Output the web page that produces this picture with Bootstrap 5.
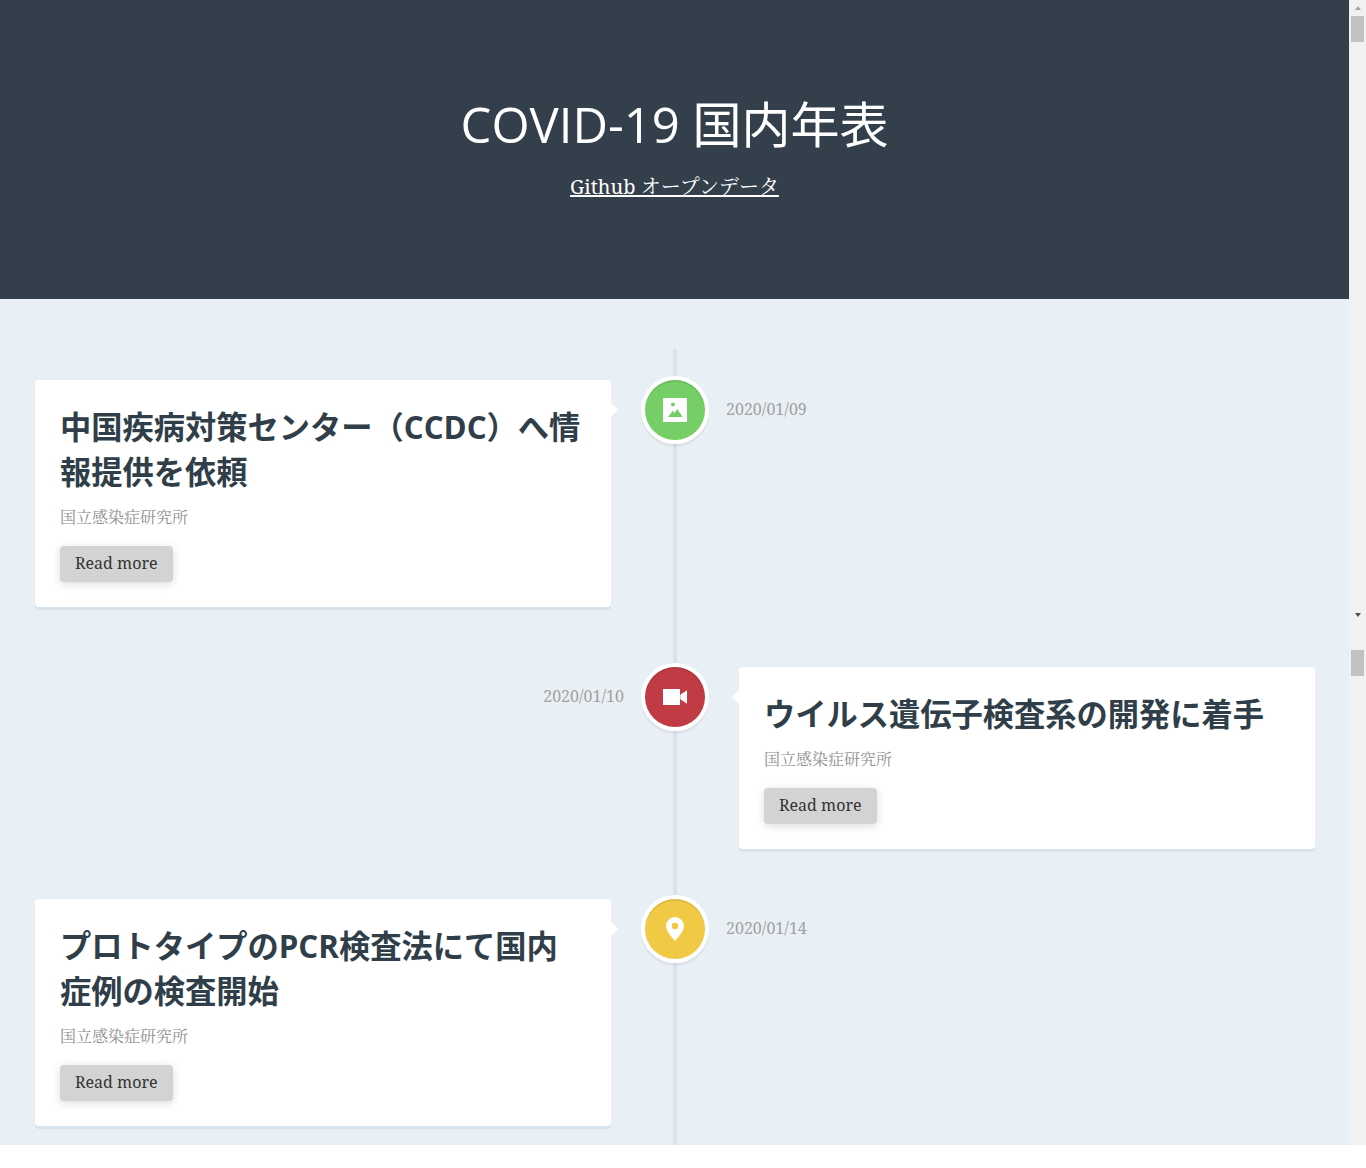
<!DOCTYPE html>
<html lang="ja">
<head>
<meta charset="utf-8">
<title>COVID-19 国内年表</title>
<link href="https://cdn.jsdelivr.net/npm/bootstrap@5.3.0/dist/css/bootstrap.min.css" rel="stylesheet">
<style>
html,body{height:100%;overflow:hidden;background:#fff}
body{font-family:"Noto Serif","Droid Serif","Noto Serif CJK JP","Liberation Serif","Noto Sans CJK JP",serif;font-size:16px;line-height:1.5}
.frame{height:1145px}
.page-pane{width:1349px;overflow:hidden;background:#e9f0f5}
.hero{height:299px;background:#333f4b;color:#fff;padding-bottom:5px}
.hero-title{font-family:"Open Sans","Noto Sans CJK JP",sans-serif;font-size:49px;font-weight:400;line-height:1.2;margin:0 0 21px}
.hero-link{color:#fff;font-size:20px;line-height:1.2}
.hero-link:hover{color:#fff}
.tl{width:1280px;margin:50px 0 0 35px;padding-top:31px;position:relative}
.tl::before{content:"";position:absolute;top:0;bottom:-60px;left:638px;width:4px;background:#d7e4ed}
.tl-row{display:grid;grid-template-columns:1fr 60px 1fr;align-items:start;position:relative}
.tl-row-2{margin-top:60px}
.tl-row-3{margin-top:50px}
.tl-card{position:relative;width:576px;padding:25px;background:#fff;border-radius:4px;box-shadow:0 3px 0 #d7e4ed}
.tl-card-left{justify-self:start}
.tl-card-right{justify-self:end}
.tl-card::before{content:"";position:absolute;top:23px;border:7px solid transparent}
.tl-card-left::before{left:100%;border-left-color:#fff}
.tl-card-right::before{right:100%;border-right-color:#fff}
.tl-head{font-family:"Open Sans","Noto Sans CJK JP",sans-serif;font-size:31.25px;font-weight:700;line-height:45px;color:#303e49;margin:0 0 10px}
.tl-sub{color:#8f8f8f;margin:0 0 17px}
.more-btn{display:inline-block;height:36px;padding:5px 15px 7px;line-height:24px;font-size:16px;border:0;border-radius:4px;background:#d3d3d3;color:#333;box-shadow:0 2px 10px rgba(0,0,0,.14)}
.tl-dot{width:60px;height:60px;border-radius:50%;color:#fff;box-shadow:0 0 0 4px #fff,inset 0 2px 0 rgba(0,0,0,.08),0 3px 0 4px rgba(0,0,0,.05)}
.dot-green{background:#75ce66}
.dot-red{background:#c03b44}
.dot-yellow{background:#f0ca45}
.tl-date{color:#a2a2a2;line-height:58px;margin:0;height:60px;white-space:nowrap}
.date-after{margin-left:21px}
.date-before{margin-right:21px;text-align:right}
.bar{width:17px;background:#f1f1f1}
.bar-up{width:0;height:0;margin:6px auto 6px;border:solid transparent;border-width:0 3.5px 4px;border-bottom-color:#a3a3a3}
.bar-thumb{width:13px;height:26px;margin:0 auto;background:#c1c1c1}
.bar-down{width:0;height:0;margin:571px auto 33px;border:solid transparent;border-width:4px 3.5px 0;border-top-color:#505050}
</style>
</head>
<body>
<div class="frame d-flex">
  <div class="page-pane">
    <header class="hero d-flex flex-column align-items-center justify-content-center text-center">
      <h1 class="hero-title">COVID-19 国内年表</h1>
      <a class="hero-link" href="#">Github オープンデータ</a>
    </header>
    <section class="tl">
      <div class="tl-row">
        <div class="tl-card tl-card-left">
          <h2 class="tl-head">中国疾病対策センター（CCDC）へ情報提供を依頼</h2>
          <p class="tl-sub">国立感染症研究所</p>
          <a class="btn more-btn" href="#">Read more</a>
        </div>
        <div class="tl-dot dot-green d-flex align-items-center justify-content-center">
          <svg width="24" height="24" viewBox="0 0 24 24" aria-hidden="true"><path fill="#fff" fill-rule="evenodd" d="M0 0h24v24H0zM10 4.6a2 2 0 1 0 0 4 2 2 0 0 0 0-4zM5 19h14.7l-5.4-8-2.9 4.3-1.3-2.8z"/></svg>
        </div>
        <p class="tl-date date-after">2020/01/09</p>
      </div>
      <div class="tl-row tl-row-2">
        <p class="tl-date date-before">2020/01/10</p>
        <div class="tl-dot dot-red d-flex align-items-center justify-content-center">
          <svg width="24" height="24" viewBox="0 0 24 24" aria-hidden="true"><path fill="#fff" d="M0 4h17v16H0zM17.3 9.7 24 5.3V18.7l-6.7-4.4z"/></svg>
        </div>
        <div class="tl-card tl-card-right">
          <h2 class="tl-head">ウイルス遺伝子検査系の開発に着手</h2>
          <p class="tl-sub">国立感染症研究所</p>
          <a class="btn more-btn" href="#">Read more</a>
        </div>
      </div>
      <div class="tl-row tl-row-3">
        <div class="tl-card tl-card-left">
          <h2 class="tl-head">プロトタイプのPCR検査法にて国内症例の検査開始</h2>
          <p class="tl-sub">国立感染症研究所</p>
          <a class="btn more-btn" href="#">Read more</a>
        </div>
        <div class="tl-dot dot-yellow d-flex align-items-center justify-content-center">
          <svg width="24" height="24" viewBox="0 0 24 24" aria-hidden="true"><path fill="#fff" fill-rule="evenodd" d="M12 0a9 9 0 0 1 9 9c0 5-5 10-9 15C8 19 3 14 3 9a9 9 0 0 1 9-9zM12 5.7a3.3 3.3 0 1 0 0 6.6 3.3 3.3 0 0 0 0-6.6z"/></svg>
        </div>
        <p class="tl-date date-after">2020/01/14</p>
      </div>
    </section>
  </div>
  <div class="bar" aria-hidden="true">
    <div class="bar-up"></div>
    <div class="bar-thumb"></div>
    <div class="bar-down"></div>
    <div class="bar-thumb"></div>
  </div>
</div>
</body>
</html>
